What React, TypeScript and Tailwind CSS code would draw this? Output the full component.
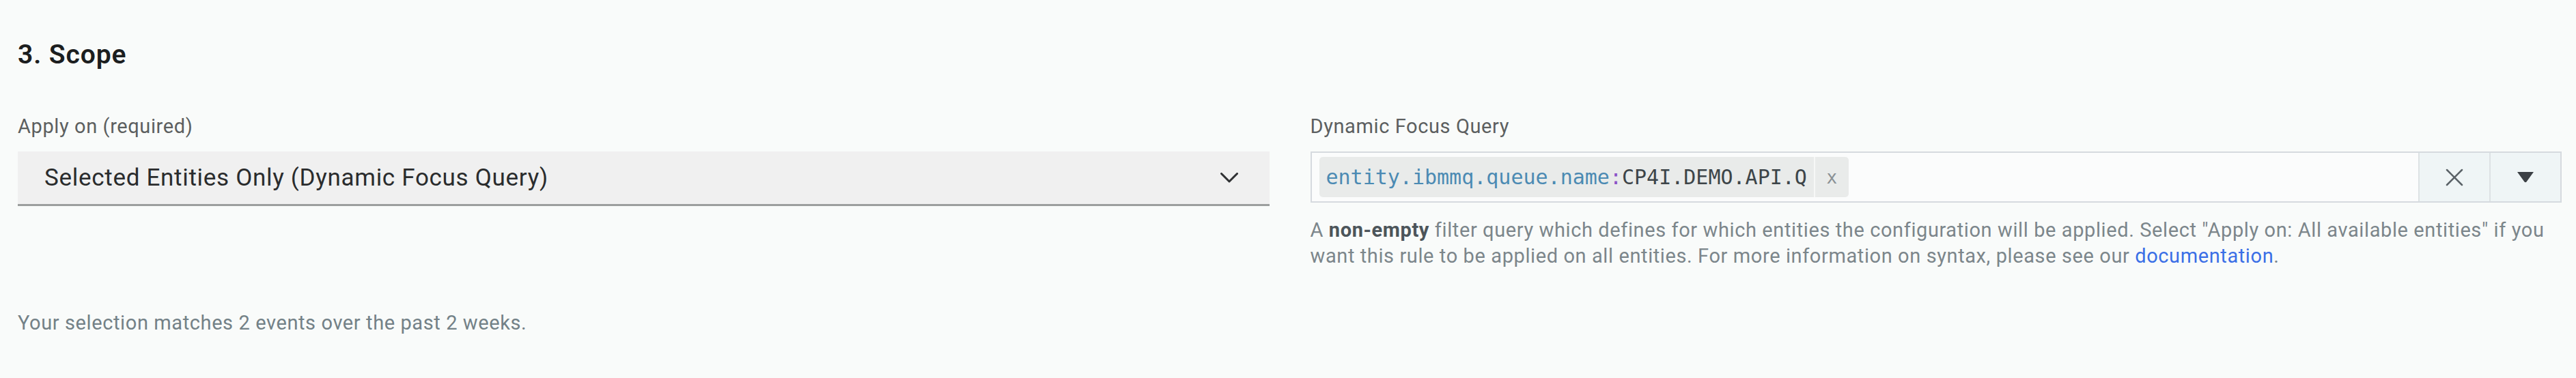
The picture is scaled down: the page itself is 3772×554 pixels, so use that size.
import React from 'react';

const sans = "font-['Roboto','Liberation_Sans',sans-serif]";

function Chevron() {
  return (
    <svg width="26" height="15" viewBox="0 0 26 15" fill="none" className="shrink-0">
      <polyline points="1.5,1.5 13,13 24.5,1.5" stroke="#2f3133" strokeWidth="3" strokeLinecap="round" strokeLinejoin="round" />
    </svg>
  );
}

function ClearIcon() {
  return (
    <svg width="26" height="26" viewBox="0 0 26 26" fill="none">
      <path d="M2 2 L24 24 M24 2 L2 24" stroke="#5b6368" strokeWidth="2.5" strokeLinecap="round" />
    </svg>
  );
}

function CaretDown() {
  return (
    <svg width="26" height="17" viewBox="0 0 26 17" fill="none">
      <path d="M1 1 L25 1 L14.5 15.5 Q13 17 11.5 15.5 Z" fill="#3b4045" />
    </svg>
  );
}

function QueryTag() {
  return (
    <div className="flex h-[59px] items-stretch rounded-[5px] bg-[#e9ebea]">
      <div className="flex items-center pl-[10px] pr-[10px] font-['DejaVu_Sans_Mono',monospace] text-[30px] leading-none">
        <span className="text-[#4b8ab3]">entity.ibmmq.queue.name</span>
        <span className="text-[#8b52c7]">:</span>
        <span className="text-[#3d4549]">CP4I.DEMO.API.Q</span>
      </div>
      <div className="w-[2px] bg-[#f6f7f6]" />
      <div className="flex w-[49px] items-center justify-center font-['DejaVu_Sans_Mono',monospace] text-[26px] leading-none text-[#8a9195]">
        x
      </div>
    </div>
  );
}

export default function App() {
  return (
    <div className={`min-h-screen bg-[#f9fbfa] pl-[26px] pr-[21px] pt-[56px] ${sans}`}>
      <h2 className="text-[39px] font-semibold leading-[48px] tracking-[0.9px] text-[#1c1e1f]">3. Scope</h2>

      <div className="mt-[63px] grid grid-cols-2 gap-x-[60px]">
        <div>
          <label className="block text-[29px] leading-[36px] tracking-[0.6px] text-[#5c5f60]">Apply on (required)</label>
          <div className="mt-[19px] flex h-[80px] items-center justify-between border-b-[3px] border-[#9c9e9e] bg-[#f0f0f0] pl-[39px] pr-[46px]">
            <span className="text-[35px] leading-[40px] tracking-[0.7px] text-[#2a2c2d]">Selected Entities Only (Dynamic Focus Query)</span>
            <Chevron />
          </div>
        </div>

        <div>
          <label className="block text-[29px] leading-[36px] tracking-[0.6px] text-[#5c5f60]">Dynamic Focus Query</label>
          <div className="mt-[19px] flex h-[75px] items-stretch border-2 border-[#d6dadf] bg-[#fbfcfc]">
            <div className="flex flex-1 items-center pl-[11px]">
              <QueryTag />
            </div>
            <button className="flex w-[104px] items-center justify-center border-l-2 border-[#dde2e4] bg-[#eff5f6]">
              <ClearIcon />
            </button>
            <button className="flex w-[104px] items-center justify-center border-l-2 border-[#dde2e4] bg-[#eff5f6]">
              <CaretDown />
            </button>
          </div>
          <p className="mt-[21px] text-[29px] leading-[38px] tracking-[0.6px] text-[#7c868b]">
            A <strong className="font-bold text-[#4c555a]">non-empty</strong> filter query which defines for which entities the configuration will be applied. Select "Apply on: All available entities" if you
            <br />
            want this rule to be applied on all entities. For more information on syntax, please see our{' '}
            <a className="text-[#3b6fe6]">documentation</a>.
          </p>
        </div>
      </div>

      <p className="mt-[61px] text-[29px] leading-[36px] tracking-[0.6px] text-[#738187]">
        Your selection matches 2 events over the past 2 weeks.
      </p>
    </div>
  );
}
